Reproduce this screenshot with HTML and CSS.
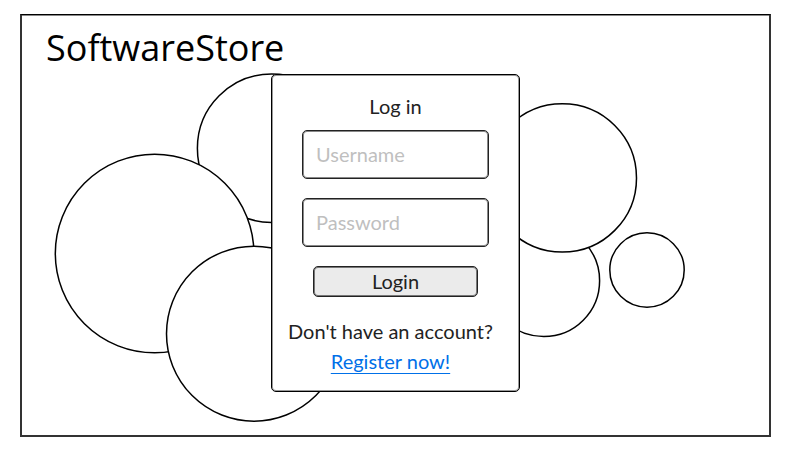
FILE: index.html
```html
<!DOCTYPE html>
<html lang="en">
<head>
<meta charset="utf-8">
<meta name="viewport" content="width=device-width, initial-scale=1">
<title>SoftwareStore</title>
<link rel="stylesheet" href="styles.css">
</head>
<body>
<main class="page">
  <svg class="bubbles" viewBox="0 0 747 420" preserveAspectRatio="xMidYMin meet" aria-hidden="true">
    <circle cx="249.6" cy="133.2" r="74.2"/>
    <circle cx="132.6" cy="238.5" r="99.3"/>
    <circle cx="232" cy="318.7" r="87.5"/>
    <circle cx="521.8" cy="265.7" r="55.8"/>
    <circle cx="540.3" cy="162.9" r="74.2"/>
    <circle cx="625" cy="255" r="37.2"/>
  </svg>
  <h1 class="brand">SoftwareStore</h1>
  <form class="card">
    <h2 class="card-title">Log in</h2>
    <input class="field" type="text" placeholder="Username" aria-label="Username">
    <input class="field" type="password" placeholder="Password" aria-label="Password">
    <button class="submit" type="submit">Login</button>
    <p class="signup">Don't have an account?<br><a class="link" href="#register">Register now!</a></p>
  </form>
</main>
</body>
</html>
```
FILE: styles.css
```css
* {
  box-sizing: border-box;
}

body {
  margin: 0;
  padding: 14px 17px 22px 20px;
  min-height: 100vh;
  display: flex;
  background: #fff;
  color: #222;
  font-family: Lato, "Liberation Sans", sans-serif;
  font-size: 20px;
  line-height: 30px;
}

.page {
  position: relative;
  flex: 1;
  display: flex;
  flex-direction: column;
  border: 2px solid #333;
  border-top: 1px solid #000;
  box-shadow: inset 0 1px #888;
}

.bubbles {
  position: absolute;
  inset: 0;
  width: 100%;
  height: 100%;
  fill: #fff;
  stroke: #000;
  stroke-width: 1.5;
}

.brand {
  position: relative;
  margin: 6px 24px 0;
  color: #000;
  font: 400 36px/53px "Open Sans", "Noto Sans", sans-serif;
}

.card {
  position: relative;
  align-self: center;
  display: flex;
  flex-direction: column;
  align-items: center;
  width: 249px;
  padding: 16px 12px 15px;
  border: 1px solid #000;
  border-radius: 5px;
  background: #fff;
  box-shadow: inset 0 0 0 1px #999;
}

.card-title {
  margin: 0 0 9px;
  font-size: 20px;
  font-weight: 400;
}

.field {
  width: 187px;
  height: 49px;
  margin-bottom: 19px;
  padding: 0 13px 2px;
  border: 1px solid #222;
  border-radius: 5px;
  background: #fff;
  box-shadow: inset 0 0 0 1px #888;
  color: #222;
  font: inherit;
}

.field::placeholder {
  color: #bfbfbf;
  opacity: 1;
}

.submit {
  width: 165px;
  height: 31px;
  padding: 0 0 2px;
  border: 1px solid #222;
  border-radius: 5px;
  background: #ebebeb;
  box-shadow: inset 0 0 0 1px #777;
  color: #222;
  font: inherit;
  line-height: 26px;
}

.signup {
  margin: 19px 10px 0 0;
  text-align: center;
}

.link {
  color: #0070e8;
  text-decoration: underline;
  text-decoration-thickness: 1px;
  text-underline-offset: 4px;
}
```
